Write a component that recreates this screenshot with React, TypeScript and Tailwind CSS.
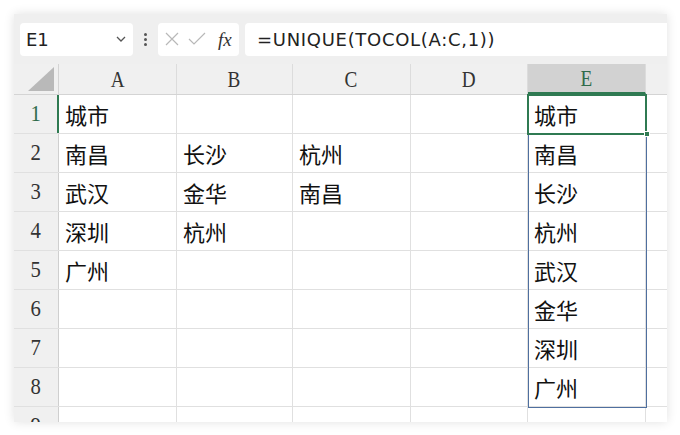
import React from "react";

const cols = ["A", "B", "C", "D", "E"];
const colW = ["w-[118px]", "w-[116px]", "w-[118px]", "w-[117px]", "w-[118px]"];

const data: string[][] = [
  ["城市", "", "", "", "城市"],
  ["南昌", "长沙", "杭州", "", "南昌"],
  ["武汉", "金华", "南昌", "", "长沙"],
  ["深圳", "杭州", "", "", "杭州"],
  ["广州", "", "", "", "武汉"],
  ["", "", "", "", "金华"],
  ["", "", "", "", "深圳"],
  ["", "", "", "", "广州"],
  ["", "", "", "", ""],
];

const cjk = { fontFamily: '"Noto Sans CJK SC", "Noto Sans", sans-serif' };
const serif = { fontFamily: '"Liberation Serif", "DejaVu Serif", serif' };
const sans = { fontFamily: '"DejaVu Sans", "Noto Sans", sans-serif' };

export default function App() {
  return (
    <div className="w-[680px] h-[435px] bg-white p-[14px] pr-[13px]">
      <div className="w-[653px] h-[408px] overflow-hidden bg-white shadow-[0_0_10px_rgba(0,0,0,0.12)]">
        {/* toolbar */}
        <div className="h-[50px] bg-[#efefef] flex items-center pl-[6px] gap-0">
          <div className="w-[113px] h-[33px] bg-white rounded-[4px] flex items-center justify-between pl-[6px] pr-[6px]">
            <span className="text-[18px] text-[#222]" style={sans}>E1</span>
            <svg width="12" height="8" viewBox="0 0 12 8"><path d="M2 2 L6 6 L10 2" fill="none" stroke="#555" strokeWidth="1.3" /></svg>
          </div>
          <div className="w-[25px] flex flex-col items-center gap-[2px]">
            <span className="w-[3px] h-[3px] bg-[#555] rounded-full" />
            <span className="w-[3px] h-[3px] bg-[#555] rounded-full" />
            <span className="w-[3px] h-[3px] bg-[#555] rounded-full" />
          </div>
          <div className="w-[81px] h-[33px] bg-white rounded-[4px] flex items-center pl-[6px] gap-[8px]">
            <svg width="16" height="16" viewBox="0 0 16 16"><path d="M2 2 L14 14 M14 2 L2 14" stroke="#b8b8b8" strokeWidth="1.2" /></svg>
            <svg width="18" height="14" viewBox="0 0 18 14"><path d="M1 7 L6 12 L17 1" fill="none" stroke="#b8b8b8" strokeWidth="1.2" /></svg>
            <span className="text-[19px] italic text-[#333] leading-none ml-[4px]" style={serif}>fx</span>
          </div>
          <div className="ml-[6px] flex-1 h-[33px] bg-white rounded-l-[4px] flex items-center pl-[12px]">
            <span className="text-[18px] tracking-[0.7px] text-[#222]" style={sans}>=UNIQUE(TOCOL(A:C,1))</span>
          </div>
        </div>
        {/* column headers */}
        <div className="flex h-[31px] bg-[#f0f0f0] border-b border-[#d4d4d4]">
          <div className="w-[45px] relative border-r border-[#d4d4d4]">
            <svg className="absolute right-[4px] bottom-[3px]" width="26" height="24" viewBox="0 0 26 24"><path d="M26 0 L26 24 L0 24 Z" fill="#b9b9b9" /></svg>
          </div>
          {cols.map((c, i) => (
            <div
              key={c}
              className={`${colW[i]} flex items-center justify-center border-r border-[#dcdcdc] text-[24px] leading-none ${c === "E" ? "bg-[#d2d2d2] text-[#2f6b4b] border-b-2 border-b-[#2f7a52]" : "text-[#333]"}`}
              style={serif}
            >
              <span className="inline-block scale-x-[0.8]">{c}</span>
            </div>
          ))}
          <div className="flex-1" />
        </div>
        {/* rows */}
        <div className="relative">
          {data.map((row, r) => (
            <div key={r} className="flex h-[39px] border-b border-[#e0e0e0]">
              <div
                className={`w-[45px] flex items-center justify-center bg-[#f0f0f0] text-[23px] ${r === 0 ? "text-[#2f6b4b] border-r-2 border-r-[#2f7a52]" : "text-[#333] border-r border-[#cfcfcf]"}`}
                style={serif}
              >
                <span className="inline-block scale-x-[0.9]">{r + 1}</span>
              </div>
              {row.map((v, c) => (
                <div
                  key={c}
                  className={`${colW[c]} flex items-center pl-[6px] border-r border-[#e0e0e0] text-[22px] text-[#111]`}
                  style={cjk}
                >
                  {v}
                </div>
              ))}
              <div className="flex-1" />
            </div>
          ))}
          {/* spill border */}
          <div className="absolute left-[514px] top-[39px] w-[119px] h-[274px] border border-[#4f6f9f] pointer-events-none" />
          {/* active cell */}
          <div className="absolute left-[513px] top-[-1px] w-[120px] h-[41px] border-2 border-[#2f7a52] pointer-events-none" />
          <div className="absolute left-[630px] top-[36px] w-[6px] h-[6px] bg-[#2f7a52] border border-white" />
        </div>
      </div>
    </div>
  );
}
